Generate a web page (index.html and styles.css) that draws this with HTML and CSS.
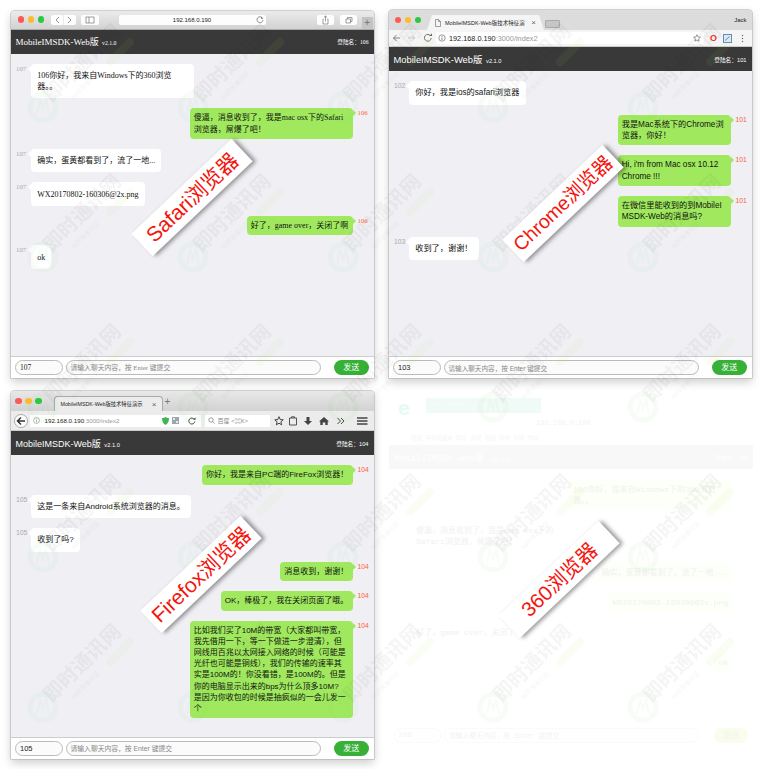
FILE: index.html
```html
<!DOCTYPE html>
<html lang="zh-CN">
<head>
<meta charset="UTF-8" />
<meta name="viewport" content="width=device-width, initial-scale=1" />
<title>MobileIMSDK-Web版 浏览器演示</title>
<link rel="stylesheet" href="styles.css">
</head>
<body>
<div class="desktop">

  <!-- Safari -->
  <section class="win win-safari">
    <div class="safari-bar">
      <span class="lights"><i class="red"></i><i class="yellow"></i><i class="green"></i></span>
      <span class="sbtn sbtn-nav">
        <svg width="25" height="10" viewBox="0 0 25 10"><path d="M8 2 5 5l3 3M17 2l3 3-3 3" fill="none" stroke="#777" stroke-width=".8"/><path d="M12.500 0v10" stroke="#ddd" stroke-width=".6"/></svg>
      </span>
      <span class="sbtn sbtn-side">
        <svg width="18" height="10" viewBox="0 0 18 10"><rect x="5" y="2" width="8" height="6" fill="none" stroke="#777" stroke-width=".7"/><path d="M8 2v6" stroke="#777" stroke-width=".7"/></svg>
      </span>
      <span class="safari-url">192.168.0.190
        <svg class="reload" width="8" height="8" viewBox="0 0 8 8"><path d="M6.600 2.200A3 3 0 1 0 7 4" fill="none" stroke="#666" stroke-width=".7"/><path d="M5.400 .8 7 2.400 5.200 3z" fill="#666"/></svg>
      </span>
      <span class="sbtn sbtn-share">
        <svg width="17" height="10" viewBox="0 0 17 10"><path d="M6.500 4H6v5h5V4h-.5M8.500 6.500V1M7 2.300 8.500 1 10 2.300" fill="none" stroke="#777" stroke-width=".7"/></svg>
      </span>
      <span class="sbtn sbtn-tabs">
        <svg width="17" height="10" viewBox="0 0 17 10"><path d="M6 4h4.500v4H6zM7.500 4V2.500H12v4h-1.500" fill="none" stroke="#777" stroke-width=".7"/></svg>
      </span>
      <span class="safari-plus">+</span>
    </div>
    <header class="head"><h2>MobileIMSDK-Web版 <small>v2.1.0</small></h2><span class="login">登陆名：106</span></header>
    <div class="msgs">
      <div class="msg in"><span class="who">107</span><div class="bubble full">106你好，我来自Windows下的360浏览<br>器。。</div></div>
      <div class="msg out"><div class="bubble full">傻逼，消息收到了，我是mac osx下的Safari<br>浏览器，屌爆了吧！</div><span class="who">106</span></div>
      <div class="msg in"><span class="who">107</span><div class="bubble">确实，蛋黄都看到了，流了一地...</div></div>
      <div class="msg in"><span class="who">107</span><div class="bubble">WX20170802-160306@2x.png</div></div>
      <div class="msg out"><div class="bubble">好了，game over，关闭了啊</div><span class="who">106</span></div>
      <div class="msg in"><span class="who">107</span><div class="bubble">ok</div></div>
    </div>
    <footer class="foot"><span class="to">107</span><span class="text">请输入聊天内容，按 Enter 键提交</span><span class="send">发送</span></footer>
  </section>

  <!-- Chrome -->
  <section class="win win-chrome">
    <div class="chrome-tabs">
      <span class="lights"><i class="red"></i><i class="yellow"></i><i class="green"></i></span>
      <span class="chrome-tab">
        <svg width="6" height="8" viewBox="0 0 6 8"><path d="M.5.5h3l2 2v5h-5zM3.500.5v2h2" fill="none" stroke="#666" stroke-width=".6"/></svg>
        <span class="tab-title">MobileIMSDK-Web版技术特征演</span><span class="tab-x">×</span>
      </span>
      <span class="chrome-new"></span>
      <span class="chrome-user">Jack</span>
    </div>
    <div class="chrome-tools">
      <svg width="44" height="10" viewBox="0 0 44 10"><path d="M8 5H1.500M4.500 2 1.500 5l3 3" fill="none" stroke="#777" stroke-width=".9"/><path d="M16 5h6.500M19.500 2l3 3-3 3" fill="none" stroke="#ccc" stroke-width=".9"/><path d="M38.700 3a3.400 3.400 0 1 0 .5 2" fill="none" stroke="#666" stroke-width=".9"/><path d="M37 3h3V.5z" fill="#666"/></svg>
      <span class="omni">
        <svg width="8" height="8" viewBox="0 0 8 8"><circle cx="4" cy="4" r="3.200" fill="none" stroke="#555" stroke-width=".6"/><path d="M4 3.500V6M4 2v.8" stroke="#555" stroke-width=".7"/></svg>
        <span class="omni-addr"><b>192.168.0.190</b><span class="dim">:3000/index2</span></span>
        <svg class="star" width="8" height="8" viewBox="0 0 8 8"><path d="m4 .7 1 2.200 2.400.3-1.800 1.600.5 2.400L4 6 1.900 7.200l.5-2.400L.6 3.200 3 2.900z" fill="none" stroke="#555" stroke-width=".6"/></svg>
      </span>
      <span class="opera">O</span>
      <svg width="9" height="9" viewBox="0 0 9 9"><rect width="9" height="9" fill="#5b8fc4"/><rect x="1" y="1" width="7" height="7" fill="#dfe9f3"/><path d="M2 6.500 6.500 2.500" stroke="#5b8fc4"/></svg>
      <svg class="dots" width="3" height="9" viewBox="0 0 3 9"><circle cx="1.500" cy="1.500" r=".7" fill="#666"/><circle cx="1.500" cy="4.500" r=".7" fill="#666"/><circle cx="1.500" cy="7.500" r=".7" fill="#666"/></svg>
    </div>
    <header class="head"><h2>MobileIMSDK-Web版 <small>v2.1.0</small></h2><span class="login">登陆名：101</span></header>
    <div class="msgs">
      <div class="msg in"><span class="who">102</span><div class="bubble">你好，我是ios的safari浏览器</div></div>
      <div class="msg out"><div class="bubble full">我是Mac系统下的Chrome浏<br>览器，你好！</div><span class="who">101</span></div>
      <div class="msg out"><div class="bubble full">Hi, i'm from Mac osx 10.12<br>Chrome !!!</div><span class="who">101</span></div>
      <div class="msg out"><div class="bubble full">在微信里能收到的到MobileI<br>MSDK-Web的消息吗?</div><span class="who">101</span></div>
      <div class="msg in"><span class="who">103</span><div class="bubble">收到了，谢谢！</div></div>
    </div>
    <footer class="foot"><span class="to">103</span><span class="text">请输入聊天内容，按 Enter 键提交</span><span class="send">发送</span></footer>
  </section>

  <!-- Firefox -->
  <section class="win win-firefox">
    <div class="ff-tabs">
      <span class="lights"><i class="red"></i><i class="yellow"></i><i class="green"></i></span>
      <span class="ff-tab"><span class="tab-title">MobileIMSDK-Web版技术特征演示</span><span class="tab-x">×</span></span>
      <span class="ff-plus">+</span>
    </div>
    <div class="ff-tools">
      <span class="ff-back"><svg width="10" height="10" viewBox="0 0 10 10"><path d="M9 5H2M5 1.500 1.500 5 5 8.500" fill="none" stroke="#333" stroke-width="1.500"/></svg></span>
      <span class="ff-url">
        <svg width="7" height="7" viewBox="0 0 8 8"><circle cx="4" cy="4" r="3.400" fill="none" stroke="#777" stroke-width=".6"/><path d="M4 3.500V6M4 2v.8" stroke="#777" stroke-width=".7"/></svg>
        <span class="ff-addr"><b>192.168.0.190</b><span class="dim">:3000/index2</span></span>
        <svg width="7" height="8" viewBox="0 0 7 8"><path d="M0 1c1.500 0 2.500-.3 3.500-1 1 .7 2 1 3.500 1 0 3.500-1 5.500-3.500 7C1 6.500 0 4.500 0 1z" fill="#3fb55a"/></svg>
        <svg width="7" height="7" viewBox="0 0 7 7"><rect width="7" height="7" fill="#9aa7b0"/><rect x="1" y="1" width="2" height="2" fill="#e6eaee"/><rect x="4" y="4" width="2" height="2" fill="#e6eaee"/></svg>
        <svg class="ff-reload" width="8" height="8" viewBox="0 0 8 8"><path d="M6.400 2.500A3 3 0 1 0 6.800 4.500" fill="none" stroke="#444" stroke-width="1"/><path d="M5 2.700h2.500V.3z" fill="#444"/></svg>
      </span>
      <span class="ff-search">
        <svg width="7" height="7" viewBox="0 0 7 7"><circle cx="3" cy="3" r="2.200" fill="none" stroke="#777" stroke-width=".7"/><path d="m4.600 4.600 2 2" stroke="#777" stroke-width=".7"/></svg>
        百度 &lt;⌘K&gt;
      </span>
      <svg class="ff-icons" width="94" height="10" viewBox="0 0 94 10">
        <path d="m5 .7 1.200 2.800 3 .3-2.300 2 .7 3L5 7.200 2.400 8.800l.7-3-2.300-2 3-.3z" fill="none" stroke="#333" stroke-width=".9"/>
        <path d="M15.500 2h7v7h-7zM17.500 2V.8h3V2" fill="none" stroke="#444" stroke-width=".9"/>
        <path d="M32.500 1h3v4H38l-4 4-4-4h2.500z" fill="#444"/>
        <path d="m50 1 5 4.500h-1.300V9h-2.400V6.500h-2.600V9h-2.400V5.500H45z" fill="#444"/>
        <path d="m63.500 2 3 3-3 3M67 2l3 3-3 3" fill="none" stroke="#444" stroke-width="1"/>
        <path d="M83 2h10.500M83 5h10.500M83 8h10.500" stroke="#444" stroke-width="1.300"/>
      </svg>
    </div>
    <header class="head"><h2>MobileIMSDK-Web版 <small>v2.1.0</small></h2><span class="login">登陆名：104</span></header>
    <div class="msgs">
      <div class="msg out"><div class="bubble">你好，我是来自PC端的FireFox浏览器！</div><span class="who">104</span></div>
      <div class="msg in"><span class="who">105</span><div class="bubble">这是一条来自Android系统浏览器的消息。</div></div>
      <div class="msg in"><span class="who">105</span><div class="bubble">收到了吗?</div></div>
      <div class="msg out"><div class="bubble">消息收到，谢谢！</div><span class="who">104</span></div>
      <div class="msg out"><div class="bubble">OK，棒极了，我在关闭页面了哦。</div><span class="who">104</span></div>
      <div class="msg out"><div class="bubble full">比如我们买了10M的带宽（大家都叫带宽，<br>我先借用一下，等一下做进一步澄清），但<br>网线用百兆以太网接入网络的时候（可能是<br>光纤也可能是铜线），我们的传输的速率其<br>实是100M的！你没看错，是100M的。但是<br>你的电脑显示出来的bps为什么顶多10M?<br>是因为你收包的时候是抽疯似的一会儿发一<br>个</div><span class="who">104</span></div>
    </div>
    <footer class="foot"><span class="to">105</span><span class="text">请输入聊天内容，按 Enter 键提交</span><span class="send">发送</span></footer>
  </section>

  <!-- 360, washed out by the white overlay in the source image -->
  <section class="win win-360">
    <div class="w360-tools">
      <div class="w360-top"><span class="w360-e">e</span><span class="w360-tab">MobileIMSDK-Web版技术特征演示</span></div>
      <div class="w360-url">192.168.0.190</div>
      <div class="w360-marks">收藏 手机收藏夹 网址 游戏 视频 购物 新闻 导航</div>
    </div>
    <header class="head"><h2>MobileIMSDK-Web版 <small>v2.1.0</small></h2><span class="login">登陆名：107</span></header>
    <div class="msgs">
      <div class="msg out"><div class="bubble full">106你好，我来自Windows下的360浏览<br>器。。</div></div>
      <div class="msg in"><div class="bubble full">傻逼，消息收到了，我是mac osx下的<br>Safari浏览器，屌爆了吧！</div></div>
      <div class="msg out"><div class="bubble">确实，蛋黄都看到了，流了一地...</div></div>
      <div class="msg out"><div class="bubble">WX20170802-160306@2x.png</div></div>
      <div class="msg in"><div class="bubble">好了，game over，关闭了啊</div></div>
      <div class="msg out"><div class="bubble">ok</div></div>
    </div>
    <footer class="foot"><span class="to">106</span><span class="text">请输入聊天内容，按 Enter 键提交</span><span class="send">发送</span></footer>
  </section>

  <svg class="watermark" width="763" height="769">
    <defs>
      <pattern id="wm" width="150" height="150" patternUnits="userSpaceOnUse">
        <text x="82" y="70" transform="rotate(-45 82 63)" text-anchor="middle" class="wm-main">即时通讯网</text>
        <text x="84" y="88" transform="rotate(-45 84 84)" text-anchor="middle" class="wm-sub">IM开发者社区</text>
        <rect x="102" y="48" width="36" height="8" rx="4" transform="rotate(-45 120 52)" class="wm-pill"/>
        <circle cx="43" cy="107" r="13" class="wm-logo"/>
        <path d="M37 114l3-14 3 9 3-9 3 14" class="wm-mark"/>
      </pattern>
    </defs>
    <rect width="763" height="769" fill="url(#wm)"/>
  </svg>

  <div class="tag tag-safari">Safari浏览器</div>
  <div class="tag tag-chrome">Chrome浏览器</div>
  <div class="tag tag-firefox">Firefox浏览器</div>
  <div class="tag tag-360">360浏览器</div>
</div>
</body>
</html>
```

FILE: styles.css
```css
:root {
  --dark: #393939;
  --chat-bg: #efeff4;
  --own: #a0e95e;
  --send: #36b036;
  --sans: "Liberation Sans", "Noto Sans CJK SC", sans-serif;
  --serif: "Liberation Serif", "Noto Sans CJK SC", serif;
}
* {
  box-sizing: border-box;
}
body {
  margin: 0;
  background: #fff;
  font-family: var(--sans);
  color: #222;
}
.desktop {
  position: relative;
  width: 763px;
  height: 769px;
  overflow: hidden;
}

/* windows sit on a free canvas */
.win {
  position: absolute;
  display: flex;
  flex-direction: column;
  width: 363px;
  background: var(--chat-bg);
  border-radius: 3px 3px 0 0;
  box-shadow: 0 0 0 .5px #aaa, 0 4px 10px rgb(0 0 0 / .2);
  overflow: hidden;
}
.win-safari { left: 10.5px; top: 10.5px; height: 367px; font-family: var(--serif); }
.win-chrome { left: 388.5px; top: 10px; height: 368px; }
.win-firefox { left: 10.5px; top: 391px; height: 367.5px; }

.lights {
  display: flex;
  gap: 3.500px;
}
.lights i {
  width: 6.500px;
  height: 6.500px;
  border-radius: 50%;
}
.lights .red { background: #fc5b57; }
.lights .yellow { background: #fdbb2e; }
.lights .green { background: #2ac93f; }

/* header */
.head {
  display: flex;
  flex: none;
  align-items: center;
  justify-content: space-between;
  height: 24px;
  padding: 0 5px;
  background: var(--dark);
  color: #fff;
}
.head h2 {
  margin: 0;
  font-size: 9px;
  font-weight: 400;
  white-space: nowrap;
}
.win-chrome .head h2 {
  font-size: 9.400px;
}
.head small {
  margin-left: 1px;
  font-size: 5.700px;
}
.login {
  font-size: 5.700px;
}

/* messages */
.msgs {
  display: flex;
  flex: 1;
  flex-direction: column;
  gap: 10px;
  padding-top: 10px;
  min-height: 0;
}
.msg {
  display: flex;
  align-items: flex-start;
}
.msg.out {
  justify-content: flex-end;
}
.who {
  width: 20.500px;
  padding-left: 5.500px;
  font-size: 6.800px;
  line-height: 9px;
  color: #aaa;
}
.out .who {
  width: 21px;
  padding-left: 5px;
  color: #ff5f3a;
}
.bubble {
  position: relative;
  padding: 6.200px;
  font-size: 8px;
  line-height: 11.150px;
  white-space: nowrap;
  color: #111;
  background: #fff;
  border-radius: 4px;
}
.out .bubble {
  padding: 4.200px;
  background: var(--own);
}
.bubble.full {
  width: 163px;
}
.win-chrome .bubble {
  font-size: 8.200px;
}
.win-chrome .bubble.full {
  width: 113px;
}
.in .bubble::before,
.out .bubble::before {
  content: "";
  position: absolute;
  top: 2px;
  border-top: 3px solid transparent;
  border-bottom: 3px solid transparent;
}
.in .bubble::before {
  left: -3px;
  border-right: 3px solid #fff;
}
.out .bubble::before {
  right: -3px;
  border-left: 3px solid var(--own);
}

/* footer */
.foot {
  display: flex;
  flex: none;
  align-items: center;
  height: 22px;
  padding: 0 5px 0 4.500px;
  background: #fff;
  border-top: .5px solid #ccc;
  font-size: 7.500px;
}
.to,
.text {
  display: flex;
  align-items: center;
  height: 15px;
  padding-left: 4px;
  background: #fbfbfb;
  border: .5px solid #bbb;
  border-radius: 8px;
}
.to {
  width: 48px;
  margin-right: 2.500px;
}
.text {
  width: 255px;
  color: #888;
  font-size: 6.800px;
  white-space: nowrap;
}
.win-chrome .text {
  font-size: 6.600px;
}
.send {
  width: 34.500px;
  height: 15px;
  margin-left: auto;
  color: #fff;
  line-height: 15px;
  text-align: center;
  background: var(--send);
  border-radius: 8px;
  font-size: 8px;
}
.tab-title {
  white-space: nowrap;
  font-size: 5.300px;
}
.tab-x {
  flex: none;
  margin-left: auto;
  font-size: 8px;
  color: #666;
}
.dim {
  color: #999;
}

/* safari toolbar */
.safari-bar {
  display: flex;
  flex: none;
  align-items: center;
  height: 19px;
  padding-left: 7px;
  background: linear-gradient(#ebebeb, #d2d2d2);
  border-bottom: .5px solid #aaa;
  font-family: var(--sans);
}
.sbtn {
  display: flex;
  height: 10px;
  background: #fdfdfd;
  border-radius: 2px;
}
.sbtn-nav { margin-left: 6.500px; }
.sbtn-side { margin-left: 5px; }
.sbtn-share { margin-left: 51px; }
.sbtn-tabs { margin-left: 6px; }
.safari-url {
  position: relative;
  width: 147px;
  height: 10px;
  margin-left: 20px;
  font-size: 6px;
  line-height: 10px;
  text-align: center;
  background: #fdfdfd;
  border-radius: 2px;
}
.reload {
  position: absolute;
  top: 1px;
  right: 2px;
}
.safari-plus {
  width: 11.500px;
  height: 12px;
  margin-top: 7px;
  margin-left: 5px;
  color: #777;
  font-size: 10px;
  line-height: 12px;
  text-align: center;
  background: #c4c4c4;
}

/* chrome toolbar */
.chrome-tabs {
  display: flex;
  flex: none;
  align-items: center;
  height: 20px;
  padding-left: 6px;
  background: #dcdcdc;
}
.chrome-tab {
  display: flex;
  align-items: center;
  gap: 4px;
  width: 117px;
  height: 15px;
  margin-top: 5px;
  margin-left: 6px;
  padding: 0 8px;
  background: #f5f5f5;
  clip-path: polygon(5px 0, calc(100% - 5px) 0, 100% 100%, 0 100%);
}
.chrome-tab .tab-title {
  font-size: 5.500px;
}
.chrome-new {
  width: 15px;
  height: 8px;
  margin-top: 7px;
  margin-left: 1px;
  background: #c6c6c6;
  border: .5px solid #aaa;
  border-radius: 1px;
}
.chrome-user {
  margin-left: auto;
  padding-right: 5px;
  font-size: 6px;
}
.chrome-tools {
  display: flex;
  flex: none;
  align-items: center;
  height: 17px;
  padding-left: 3.500px;
  background: #f5f5f5;
  border-bottom: .5px solid #ccc;
}
.omni {
  display: flex;
  align-items: center;
  gap: 3px;
  width: 268px;
  height: 12.500px;
  padding: 0 3px 0 2px;
  font-size: 7.300px;
  white-space: nowrap;
  background: #fff;
  border-radius: 2px;
}
.omni b {
  font-weight: 400;
}
.star {
  margin-left: auto;
}
.opera {
  width: 9px;
  margin: 0 5px;
  color: #f0322d;
  font-size: 9px;
  font-weight: 700;
  line-height: 9px;
  text-align: center;
}
.dots {
  margin-left: 8.500px;
}

/* firefox toolbar */
.ff-tabs {
  display: flex;
  flex: none;
  align-items: center;
  height: 20px;
  padding-left: 4.500px;
  background: linear-gradient(#e8e8e8, #d2d2d2);
}
.ff-tab {
  display: flex;
  align-items: center;
  width: 109px;
  height: 15px;
  margin-top: 5px;
  margin-left: 12px;
  padding: 0 5px 0 6px;
  background: #ececec;
  border: .5px solid #aaa;
  border-bottom: 0;
  border-radius: 4px 4px 0 0;
}
.ff-plus {
  margin-left: 2px;
  color: #777;
  font-size: 10px;
}
.ff-tools {
  display: flex;
  flex: none;
  align-items: center;
  height: 20px;
  padding-left: 3px;
  background: #ececec;
  border-bottom: .5px solid #ccc;
}
.ff-back {
  display: flex;
  align-items: center;
  justify-content: center;
  flex: none;
  width: 14px;
  height: 14px;
  background: #fff;
  border: .5px solid #aaa;
  border-radius: 50%;
}
.ff-url {
  display: flex;
  align-items: center;
  gap: 3px;
  width: 171px;
  height: 12px;
  margin-left: 2px;
  padding: 0 5px 0 3px;
  background: #fff;
}
.ff-addr {
  flex: 1;
  margin-left: 2px;
  font-size: 6.200px;
  white-space: nowrap;
}
.ff-addr b {
  font-weight: 400;
}
.ff-reload {
  margin-left: 6px;
}
.ff-search {
  display: flex;
  align-items: center;
  gap: 3px;
  width: 65px;
  height: 12px;
  margin-left: 4px;
  padding-left: 3px;
  color: #888;
  font-size: 6px;
  background: #fff;
}
.ff-icons {
  margin-left: 4px;
}

/* 360 window, nearly white */
.win-360 {
  left: 389px;
  top: 397px;
  width: 364px;
  height: 362px;
  background: #fff;
  box-shadow: none;
  color: #f3f3f3;
  font-family: "Liberation Mono", "Noto Sans CJK SC", monospace;
}
.win-360 .head {
  background: #f8f8f8;
}
.win-360 .msgs {
  padding-top: 11px;
  gap: 11px;
}
.win-360 .bubble {
  padding: 4px;
  color: #f1f1f1;
  background: #fdfff9;
}
.win-360 .in .bubble {
  margin-left: 23px;
  background: #fff;
}
.win-360 .out .bubble {
  margin-right: 21px;
}
.win-360 .bubble::before {
  display: none;
}
.win-360 .foot {
  height: 20px;
  margin-bottom: 14px;
  background: #fff;
  border-top: 0;
  color: #f3f3f3;
}
.win-360 .text {
  color: #f3f3f3;
}
.win-360 .to,
.win-360 .text {
  background: #fff;
  border-color: #fafafa;
}
.win-360 .send {
  color: #f3f3f3;
  background: #f8fdec;
}
.w360-tools {
  flex: none;
  height: 48px;
  padding-top: 1px;
  font-size: 6px;
}
.w360-top {
  display: flex;
  height: 17px;
}
.w360-e {
  width: 20px;
  height: 23px;
  margin-left: 9px;
  color: #e4faf4;
  font-size: 20px;
  font-weight: 700;
  line-height: 23px;
}
.w360-tab {
  width: 115px;
  height: 15px;
  margin-left: 8px;
  padding-left: 6px;
  color: #fafafa;
  line-height: 15px;
  background: #f0fbf8;
  white-space: nowrap;
  font-size: 5px;
}
.w360-url {
  margin-top: 4px;
  margin-left: 147px;
  font-size: 7px;
  color: #f3f3f3;
}
.w360-marks {
  margin-top: 7px;
  margin-left: 22px;
  color: #f6f6f6;
  font-size: 5.500px;
}

/* watermark sits over the windows */
.watermark {
  position: absolute;
  left: 0;
  top: 0;
  pointer-events: none;
}
.wm-main {
  font: 700 20px var(--sans);
  fill: rgb(0 0 0 / .04);
}
.wm-sub {
  font: 400 6px var(--sans);
  fill: rgb(0 0 0 / .04);
}
.wm-pill {
  fill: rgb(170 220 60 / .06);
}
.wm-logo {
  fill: none;
  stroke: rgb(90 200 90 / .05);
  stroke-width: 5;
}
.wm-mark {
  fill: none;
  stroke: rgb(90 200 90 / .05);
  stroke-width: 2;
}

/* rotated browser names */
.tag {
  position: absolute;
  width: 138px;
  height: 31px;
  margin: -15.500px 0 0 -69px;
  color: #f5140c;
  font-size: 21px;
  line-height: 31px;
  text-align: center;
  white-space: nowrap;
  background: #fff;
  box-shadow: 2.500px 2.500px 4px rgb(0 0 0 / .4);
  transform: rotate(-43.500deg);
}
.tag-safari { left: 192px; top: 197px; }
.tag-chrome { left: 563px; top: 203px; font-size: 19.500px; }
.tag-firefox { left: 201px; top: 574px; }
.tag-360 { left: 559px; top: 579px; font-size: 20.500px; }
```
